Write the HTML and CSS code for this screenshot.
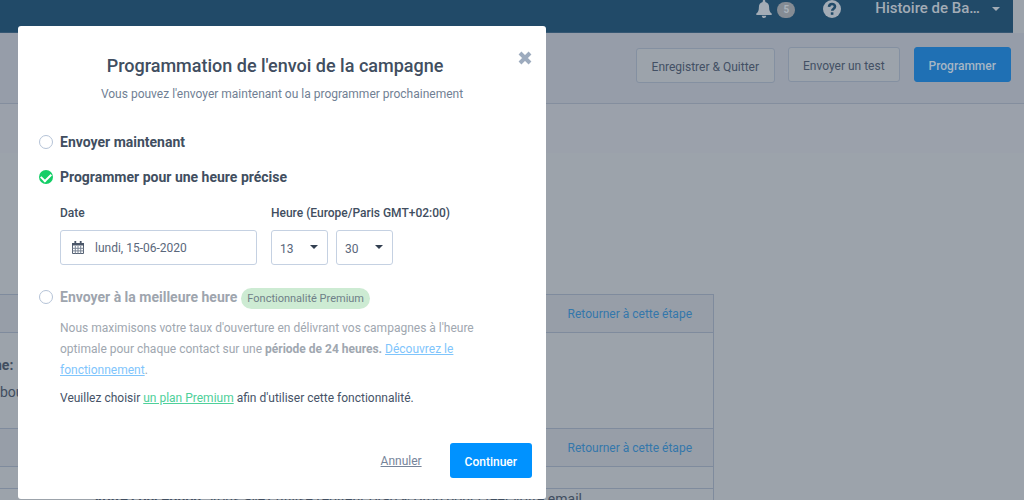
FILE: index.html
```html
<!DOCTYPE html>
<html lang="fr">
<head>
<meta charset="utf-8">
<meta name="viewport" content="width=device-width, initial-scale=1">
<title>Programmation de l'envoi de la campagne</title>
<link rel="stylesheet" href="styles.css">
</head>
<body>
<div class="page">
  <header class="topbar">
    <nav class="topbar-inner">
      <svg class="bell" viewBox="0 0 16 18" aria-hidden="true"><path d="M8 0c-.8 0-1.300.5-1.300 1.300v.6C4.200 2.500 2.900 4.500 2.900 7c0 3.500-.7 5-2.600 6.600V15h15.400v-1.400C13.800 12 13.100 10.500 13.100 7c0-2.500-1.300-4.500-3.800-5.100v-.6C9.300.5 8.800 0 8 0zM5.800 15.800h4.400C10.200 17.200 9.200 18 8 18s-2.200-.8-2.200-2.200z"/></svg>
      <span class="count">5</span>
      <svg class="help" viewBox="0 0 18 18" aria-hidden="true"><circle cx="9" cy="9" r="9"/><path class="help-mark" d="M6 6.800C6.200 4.900 7.300 4 9 4c1.800 0 3 1 3 2.500C12 8.600 9.200 8.700 9.200 10.800"/><rect class="help-dot" x="7.800" y="12.300" width="2.600" height="2.500"/></svg>
      <button class="account" type="button">Histoire de Ba…<span class="caret"></span></button>
    </nav>
  </header>
  <div class="toolbar">
    <button class="tool tool-save" type="button">Enregistrer &amp; Quitter</button>
    <button class="tool tool-test" type="button">Envoyer un test</button>
    <button class="tool tool-primary" type="button">Programmer</button>
  </div>
  <div class="band"></div>
  <main class="steps">
    <section class="card">
      <div class="card-head"><a href="#">Retourner à cette étape</a></div>
      <div class="card-body"><strong>ne:</strong><span>bou</span></div>
    </section>
    <section class="card">
      <div class="card-head"><a href="#">Retourner à cette étape</a></div>
      <div class="card-design"><p><strong>Votre conception:</strong> Vous avez utilisé l'éditeur Drag &amp; Drop pour créer votre email</p></div>
    </section>
  </main>
</div>
<div class="overlay">
  <form class="modal" role="dialog" aria-labelledby="title">
    <button class="close" type="button" aria-label="Fermer"><svg viewBox="0 0 14 14" aria-hidden="true"><path d="M2 2l10 10M12 2L2 12"/></svg></button>
    <h1 id="title">Programmation de l'envoi de la campagne</h1>
    <p class="subtitle">Vous pouvez l'envoyer maintenant ou la programmer prochainement</p>
    <div class="option"><input type="radio" name="when" id="now"><label for="now">Envoyer maintenant</label></div>
    <div class="option"><input type="radio" name="when" id="later" checked><label for="later">Programmer pour une heure précise</label></div>
    <div class="fields">
      <div class="field date">
        <label for="date">Date</label>
        <div class="date-box">
          <svg viewBox="0 0 12 13" aria-hidden="true"><path class="cal" d="M.5 3h11v9.500H.5z"/><path class="cal cal-grid" d="M.5 7.300h11M.5 9.900h11M3.300 5v7.500M6 5v7.500M8.700 5v7.500"/><path class="cal-top" d="M0 2h12v2.500H0zM2.400 0h1.800v3H2.400zM7.800 0h1.800v3H7.800z"/></svg>
          <input type="text" id="date" value="lundi, 15-06-2020">
        </div>
      </div>
      <div class="field">
        <label for="hour">Heure (Europe/Paris GMT+02:00)</label>
        <div class="times">
          <span class="select"><select id="hour"><option>13</option></select></span>
          <span class="select"><select aria-label="Minutes"><option>30</option></select></span>
        </div>
      </div>
    </div>
    <div class="option premium"><input type="radio" name="when" id="best" disabled><label for="best">Envoyer à la meilleure heure</label><span class="badge">Fonctionnalité Premium</span></div>
    <p class="detail">Nous maximisons votre taux d'ouverture en délivrant vos campagnes à l'heure optimale pour chaque contact sur une <strong>période de 24 heures.</strong> <a href="#">Découvrez le fonctionnement</a>.</p>
    <p class="upgrade">Veuillez choisir <a href="#">un plan Premium</a> afin d'utiliser cette fonctionnalité.</p>
    <div class="actions">
      <button class="cancel" type="button">Annuler</button>
      <button class="continue" type="submit">Continuer</button>
    </div>
  </form>
</div>
</body>
</html>
```
FILE: styles.css
```css
* { box-sizing: border-box; }
body { margin: 0; font: 12px/22px Roboto, "Liberation Sans", sans-serif; color: #414e60; background: #9ca3ab; }
h1, p { margin: 0; }
button, input, select { font: inherit; color: inherit; margin: 0; }
button { cursor: pointer; }
strong { font-weight: 700; }

.page { height: 100vh; overflow: hidden; }
.topbar { padding-right: 11px; }
.topbar-inner { height: 33px; display: flex; justify-content: flex-end; align-items: flex-start; padding-right: 13px; background: #214a68; border-bottom: 1px solid #355773; }
.bell { width: 16px; height: 18px; fill: #a3acb6; }
.count { width: 18px; height: 16px; margin: 2px 28px 0 5px; border-radius: 8px; background: #858c94; color: #a9b2bb; font-size: 10px; font-weight: 700; line-height: 16px; text-align: center; }
.help { width: 18px; height: 18px; fill: #a3acb6; }
.help-mark { fill: none; stroke: #214a68; stroke-width: 2.600; }
.help-dot { fill: #214a68; }
.account { display: flex; align-items: center; gap: 12px; margin-left: 34px; padding: 0; border: 0; background: none; color: #a3acb6; font-size: 15px; font-weight: 500; line-height: 17px; }
.caret { border: 4px solid transparent; border-top-color: #a3acb6; border-bottom: 0; }

.toolbar { height: 71px; display: flex; justify-content: flex-end; align-items: flex-start; padding: 14px 13px 0 0; background: #969da9; border-bottom: 1px solid #848e9e; }
.tool { height: 35px; padding: 2px 14px 0; border: 1px solid #8490a1; border-radius: 3px; background: #9ca3ab; color: #435064; }
.tool-save { margin: 1px 13px 0 0; padding: 2px 15px 0; }
.tool-test { margin-right: 14px; }
.tool-primary { border-color: #1f70b4; background: #1f70b4; color: #a6b6c4; font-weight: 500; }
.band { height: 49px; background: #9ba1ab; }

.steps { margin-top: 141px; width: 714px; }
.card { height: 134px; border: 1px solid #7f8b9d; border-width: 1px 1px 0 0; }
.card-head { height: 38px; display: flex; align-items: center; justify-content: flex-end; padding-right: 21px; background: #979ea8; border-bottom: 1px solid #7f8b9d; }
.card-head a { color: #3477ab; font-size: 12px; text-decoration: none; }
.card-body { display: flex; flex-direction: column; gap: 5px; padding-top: 21px; font-size: 14px; }
.card-body strong { margin-left: -6px; }
.card-design { margin-top: 21px; border-top: 1px solid #7f8b9d; font-size: 14px; line-height: 21px; }
.card-design p { padding-right: 131px; text-align: right; white-space: nowrap; }

.overlay { position: fixed; inset: 0; padding: 26px 18px 0; }
.modal { position: relative; max-width: 528px; padding: 28px 14px 21px 42px; border-radius: 3px; background: #fff; }
.close { position: absolute; top: 25px; right: 14px; width: 14px; height: 14px; padding: 0; border: 0; background: none; }
.close svg { display: block; width: 14px; height: 14px; fill: none; stroke: #9dabbe; stroke-width: 4; }
h1 { margin-right: 42px; font-size: 18px; font-weight: 500; line-height: 24px; text-align: center; }
.subtitle { margin: 5px 28px 23px 0; color: #717f94; text-align: center; }

.option { height: 28px; display: flex; align-items: center; margin: 0 0 7px -21px; font-size: 14px; font-weight: 700; }
.option input { appearance: none; flex: none; width: 14px; height: 14px; margin-right: 7px; border: 1px solid #b5c3d7; border-radius: 50%; background: #fff; }
.option input:checked { display: grid; place-items: center; border: 0; background: #13ce66; }
.option input:checked::after { content: ""; width: 8px; height: 5px; margin-bottom: 2px; border: solid #fff; border-width: 0 0 2px 2px; transform: rotate(-45deg); }

.fields { display: flex; gap: 14px; margin-top: 11px; }
.field label { display: block; margin-bottom: 6px; font-weight: 500; }
.date { width: 197px; }
.date-box { height: 35px; display: flex; align-items: center; gap: 11px; padding: 0 11px; border: 1px solid #c5d1e2; border-radius: 3px; }
.date-box svg { flex: none; width: 12px; height: 13px; }
.date-box input { width: 100%; padding: 1px 0 0; border: 0; outline: 0; background: none; color: #5a677b; }
.cal { fill: none; stroke: #566274; stroke-width: 1; }
.cal-grid { stroke: #7a8595; }
.cal-top { fill: #4a5668; }
.times { display: flex; gap: 8px; }
.select { position: relative; width: 57px; height: 35px; }
.select::after { content: ""; position: absolute; top: 15px; right: 10px; border: 4px solid transparent; border-top-color: #323f50; border-bottom: 0; pointer-events: none; }
select { appearance: none; width: 100%; height: 100%; padding: 2px 8px 0; border: 1px solid #c5d1e2; border-radius: 3px; background: #fff; color: #5a677b; }

.premium { margin-top: 18px; margin-bottom: 7px; color: #9ea5ae; }
.badge { margin: 2px 0 0 4px; padding: 0 6px; border-radius: 11px; background: #cdebd3; color: #6f8088; font-size: 11px; font-weight: 400; line-height: 21px; }
.detail { margin-right: 28px; line-height: 21px; color: #a0a7b0; }
.detail a { color: #7fc5fc; }
.upgrade { margin-top: 7px; line-height: 21px; color: #465367; }
.upgrade a { color: #4fd09a; }
.actions { display: flex; justify-content: flex-end; align-items: center; gap: 28px; margin-top: 34px; }
.cancel { padding: 0; border: 0; background: none; color: #76849a; text-decoration: underline; }
.continue { height: 35px; padding: 2px 15px 0; border: 0; border-radius: 3px; background: #0092ff; color: #fff; font-weight: 500; }
```
